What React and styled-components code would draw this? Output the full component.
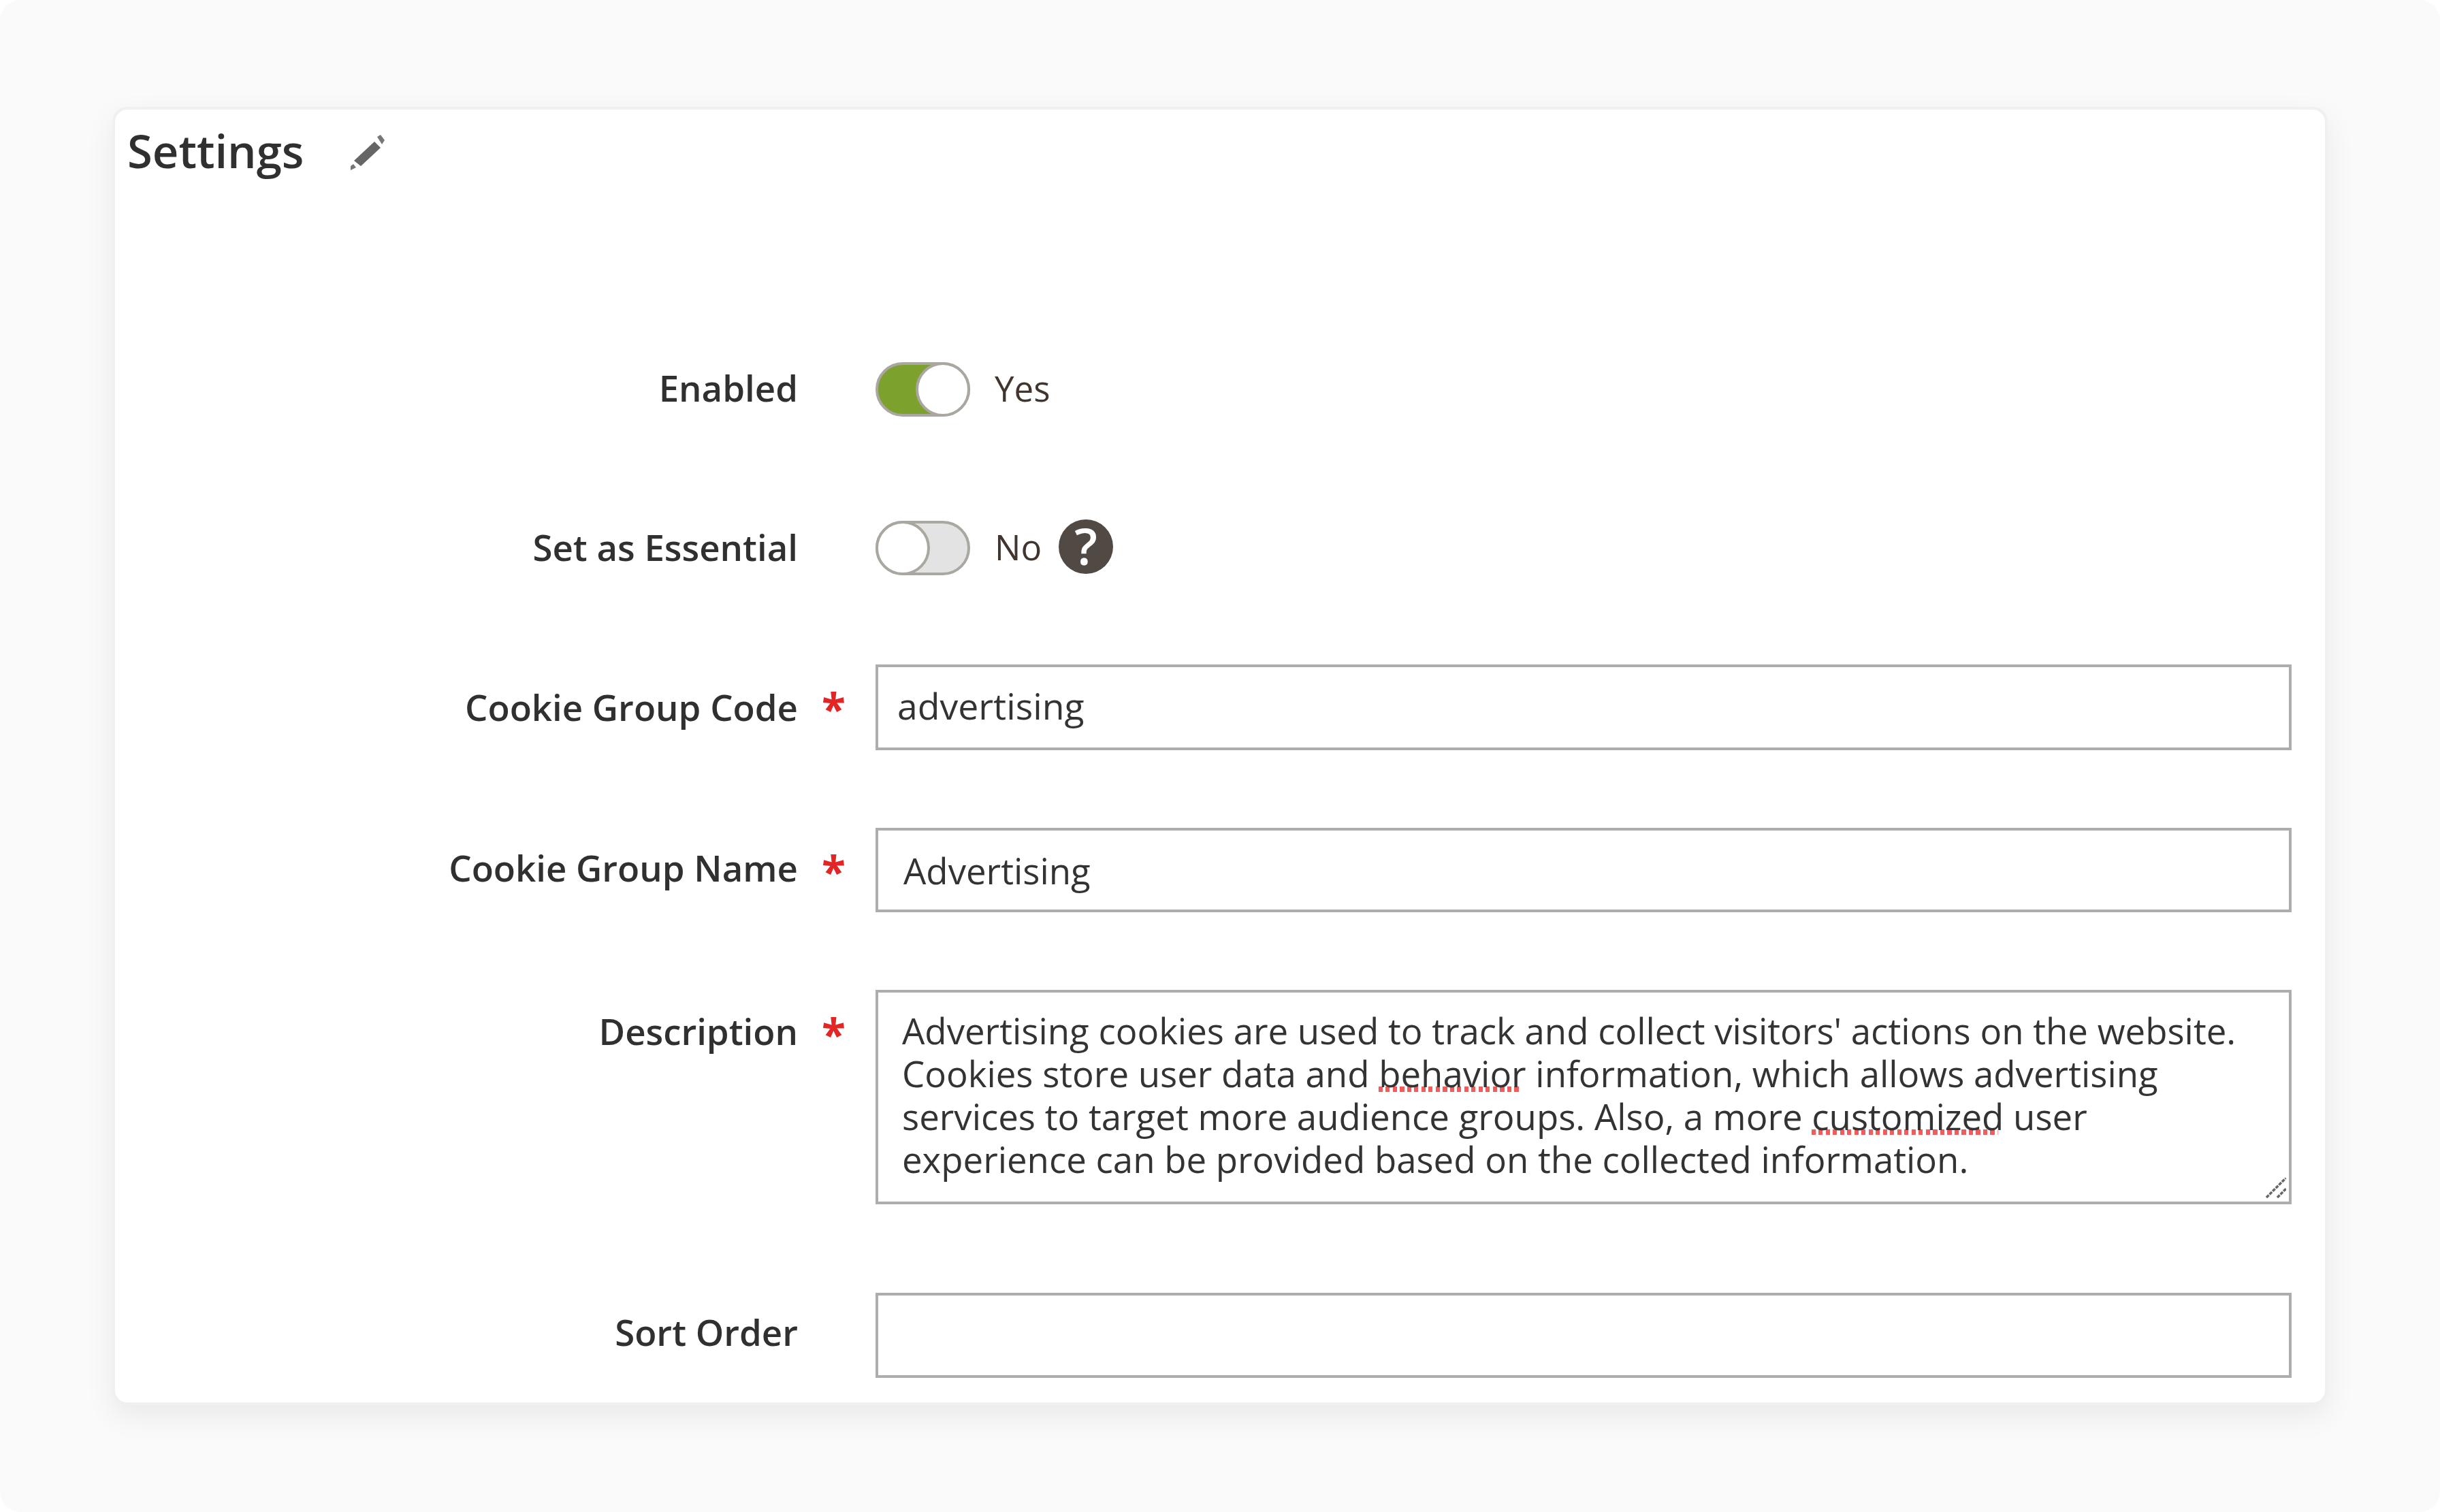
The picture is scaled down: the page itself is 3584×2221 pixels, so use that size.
import React from "react";
import styled, { createGlobalStyle } from "styled-components";

const GlobalStyle = createGlobalStyle`
  html, body {
    margin: 0;
    padding: 0;
    background: #fff;
  }
  body {
    font-family: "Open Sans", "Liberation Sans", sans-serif;
  }
`;

const App = () => {
  return (
    <>
      <GlobalStyle />
      <Page>
        <Card>
          <Header>
            <Title>Settings</Title>
            <Pencil viewBox="0 0 53 53">
              <path d="M8 39 L38 11 L47 20 L18 47 Z" fill="#666" />
              <path d="M42 4 L47 1 L53 9 L49 15 Z" fill="#777" />
              <path d="M3 47 L7 44 L11 49 L3 53 Z" fill="#777" />
            </Pencil>
          </Header>

          <Row $top={219} $height={79}>
            <Label $shift={-2}>Enabled</Label>
            <Star />
            <SwitchLine>
              <Switch $on>
                <Knob $on />
              </Switch>
              <SwitchText>Yes</SwitchText>
            </SwitchLine>
          </Row>

          <Row $top={152} $height={82}>
            <Label $shift={-1}>Set as Essential</Label>
            <Star />
            <SwitchLine>
              <Switch>
                <Knob />
              </Switch>
              <SwitchText>No</SwitchText>
              <Help>?</Help>
            </SwitchLine>
          </Row>

          <Row $top={131} $height={126}>
            <Label $shift={0}>Cookie Group Code</Label>
            <Star>*</Star>
            <TextInput readOnly value="advertising" $pad={28} $shift={-3} $size={53.5} />
          </Row>

          <Row $top={114} $height={124}>
            <Label $shift={-3}>Cookie Group Name</Label>
            <Star>*</Star>
            <TextInput readOnly value="Advertising" $pad={37} $shift={0} />
          </Row>

          <Row $top={114} $height={315} $start>
            <Label $shift={0} $area>
              Description
            </Label>
            <Star $area>*</Star>
            <AreaBox>
              Advertising cookies are used to track and collect visitors' actions on the website.
              <br />
              Cookies store user data and <Misspelled>behavior</Misspelled> information, which allows advertising
              <br />
              services to target more audience groups. Also, a more <Misspelled>customized</Misspelled> user
              <br />
              experience can be provided based on the collected information.
              <Grip viewBox="0 0 30 30">
                <path d="M1 29 L30 0 M17 29 L30 16" stroke="#666" strokeWidth="3.5" strokeDasharray="5 1.5" fill="none" />
              </Grip>
            </AreaBox>
          </Row>

          <Row $top={130} $height={125}>
            <Label $shift={-5}>Sort Order</Label>
            <Star />
            <TextInput readOnly value="" $pad={28} $shift={0} />
          </Row>
        </Card>
      </Page>
    </>
  );
};

export default App;

const Page = styled.div`
  width: 3584px;
  height: 2221px;
  padding: 157px 0 0 165px;
  box-sizing: border-box;
  overflow: hidden;
  background: #fafafa;
  border-radius: 30px;
`;

const Card = styled.div`
  width: 3254px;
  height: 1907px;
  box-sizing: border-box;
  background: #fff;
  border: 4px solid #f0f0f0;
  border-radius: 22px;
  box-shadow: 0 16px 44px rgba(0, 0, 0, 0.07);
`;

const Header = styled.div`
  display: flex;
  align-items: center;
  height: 152px;
  box-sizing: border-box;
  padding: 0 0 32px 18px;
`;

const Title = styled.div`
  font-size: 67px;
  font-weight: 600;
  color: #303030;
  width: 325px;
`;

const Pencil = styled.svg`
  width: 53px;
  height: 53px;
  margin-top: 4px;
`;

const Row = styled.div`
  display: grid;
  grid-template-columns: 1003px 114px 2080px;
  align-items: ${(p) => (p.$start ? "start" : "center")};
  height: ${(p) => p.$height}px;
  margin-top: ${(p) => p.$top}px;
`;

const Label = styled.div`
  font-size: 52.75px;
  font-weight: 600;
  color: #303030;
  text-align: right;
  line-height: 70px;
  position: relative;
  top: ${(p) => p.$shift}px;
  padding-top: ${(p) => (p.$area ? "26px" : "0")};
`;

const Star = styled.div`
  font-size: 64px;
  font-weight: 700;
  color: #e22626;
  line-height: 70px;
  padding-left: 35px;
  padding-top: ${(p) => (p.$area ? "30px" : "4px")};
`;

const SwitchLine = styled.div`
  display: flex;
  align-items: center;
`;

const Switch = styled.div`
  width: 139px;
  height: 80px;
  box-sizing: border-box;
  border: 4px solid #aaa6a0;
  border-radius: 40px;
  background: ${(p) => (p.$on ? "#7ca22d" : "#e3e3e3")};
  display: flex;
  justify-content: ${(p) => (p.$on ? "flex-end" : "flex-start")};
`;

const Knob = styled.div`
  width: 80px;
  height: 80px;
  margin: -4px;
  box-sizing: border-box;
  border: 4px solid #aaa6a0;
  border-radius: 50%;
  background: #fff;
`;

const SwitchText = styled.div`
  font-size: 51px;
  color: #41362f;
  margin-left: 36px;
  line-height: 70px;
  padding-bottom: 4px;
`;

const Help = styled.div`
  width: 80px;
  height: 80px;
  margin: 0 0 4px 25px;
  border-radius: 50%;
  background: #514a44;
  color: #fff;
  font-size: 74px;
  font-weight: 600;
  line-height: 78px;
  text-align: center;
`;

const TextInput = styled.input`
  width: 100%;
  height: 100%;
  box-sizing: border-box;
  border: 4px solid #adadad;
  border-radius: 0;
  outline: none;
  background: #fff;
  font-family: inherit;
  font-size: ${(p) => p.$size || 52.75}px;
  color: #333;
  padding: ${(p) => (p.$shift > 0 ? p.$shift * 2 : 0)}px 0 ${(p) => (p.$shift < 0 ? -p.$shift * 2 : 0)}px ${(p) => p.$pad}px;
`;

const AreaBox = styled.div`
  position: relative;
  height: 315px;
  box-sizing: border-box;
  border: 4px solid #adadad;
  padding: 24px 0 0 35px;
  font-size: 52.75px;
  line-height: 63px;
  color: #333;
  white-space: nowrap;
`;

// the browser's spell check mark: a row of red dashes just under the baseline
const Misspelled = styled.span`
  background-image: repeating-linear-gradient(90deg, #f25c5c 0 6px, transparent 6px 10.5px);
  background-repeat: no-repeat;
  background-size: 97% 8px;
  background-position: 0 calc(100% - 8px);
`;

const Grip = styled.svg`
  position: absolute;
  right: 4px;
  bottom: 5px;
  width: 30px;
  height: 30px;
`;
